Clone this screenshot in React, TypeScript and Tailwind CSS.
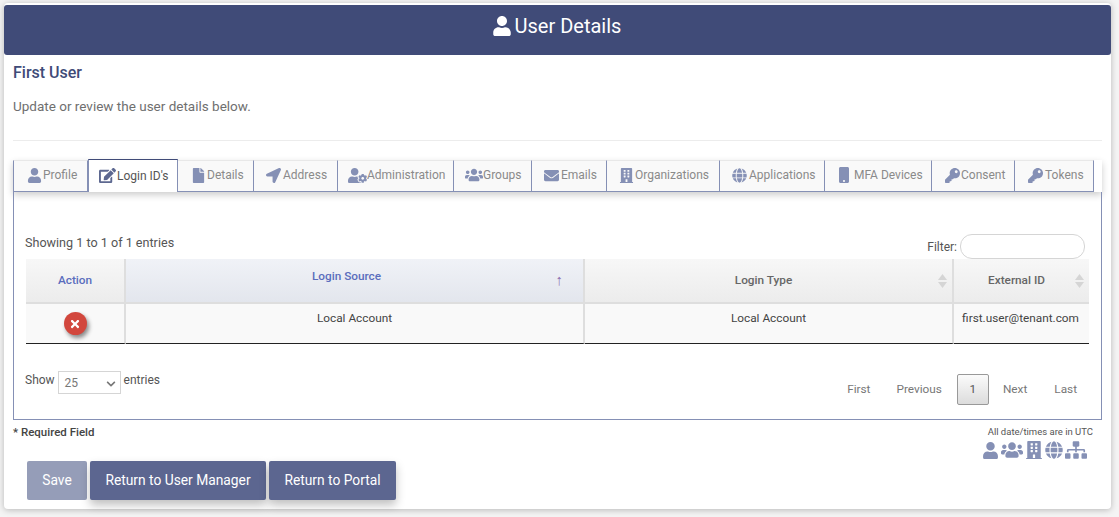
import { FaUser, FaEdit, FaFile, FaLocationArrow, FaUserCog, FaUsers, FaEnvelope, FaBuilding, FaGlobe, FaMobile, FaKey, FaSitemap, FaTimes, FaChevronDown } from "react-icons/fa";

const tabs = [
  { label: "Profile", Icon: FaUser, w: "w-[75px] pl-[13px]", size: "text-[15px]", gap: "gap-[1px]" },
  { label: "Login ID's", Icon: FaEdit, w: "w-[90px] pl-[10px]", size: "text-[17px]", gap: "gap-[1px]", active: true },
  { label: "Details", Icon: FaFile, w: "w-[76px] pl-[13px]", size: "text-[15px]", gap: "gap-[1px]" },
  { label: "Address", Icon: FaLocationArrow, w: "w-[84px] pl-[12px]", size: "text-[15px]", gap: "gap-[2px]" },
  { label: "Administration", Icon: FaUserCog, w: "w-[116px] pl-[10px]", size: "text-[19px]", gap: "gap-0" },
  { label: "Groups", Icon: FaUsers, w: "w-[78px] pl-[11px]", size: "text-[18px]", gap: "gap-0" },
  { label: "Emails", Icon: FaEnvelope, w: "w-[75px] pl-[12px]", size: "text-[15px]", gap: "gap-[2px]" },
  { label: "Organizations", Icon: FaBuilding, w: "w-[113px] pl-[12px]", size: "text-[15px]", gap: "gap-[1px]" },
  { label: "Applications", Icon: FaGlobe, w: "w-[105px] pl-[12px]", size: "text-[15px]", gap: "gap-[2px]" },
  { label: "MFA Devices", Icon: FaMobile, w: "w-[107px] pl-[11px]", size: "text-[16px]", gap: "gap-[2px]" },
  { label: "Consent", Icon: FaKey, w: "w-[83px] pl-[13px]", size: "text-[15px]", gap: "gap-[1px]" },
  { label: "Tokens", Icon: FaKey, w: "w-[79px] pl-[13px]", size: "text-[15px]", gap: "gap-[2px]" },
];

function Sort() {
  return (
    <svg width="9" height="14" viewBox="0 0 9 14" className="block">
      <path d="M4.5 0 L9 6 L0 6 Z" fill="#d5d5d5" />
      <path d="M4.5 14 L9 8 L0 8 Z" fill="#d5d5d5" />
    </svg>
  );
}

const cellR = "border-r-2 border-r-[#dedede]";
const headB = "border-b-2 border-b-[#dedede]";
const rowB = "border-b border-b-[#222]";

export default function App() {
  return (
    <div className="h-[517px] bg-[#f4f4f4] pt-[3px] pl-[4px] pr-[8px] font-['Roboto',sans-serif] overflow-hidden">
      <div className="h-[506px] pt-[2px] bg-white rounded-[4px] shadow-[0_1px_6px_rgba(0,0,0,0.25)]">
        <header className="h-[50px] pb-[8px] pr-[2px] bg-[#404b78] rounded-[3px] flex items-center justify-center gap-[3px] text-white text-[20px]">
          <FaUser className="text-[20px]" />
          <span>User Details</span>
        </header>
        <div className="px-[9px]">
          <h2 className="mt-[8px] text-[16px] leading-[20px] font-medium text-[#404b78]">First User</h2>
          <p className="mt-[13px] text-[13.5px] leading-[20px] text-[#6f6f6f]">Update or review the user details below.</p>
          <hr className="mt-[24px] border-t border-[#ececec]" />
          <div className="mt-[19px] bg-white shadow-[0_3px_7px_rgba(0,0,0,0.2)] h-[32px] flex items-stretch">
            {tabs.map(({ label, Icon, w, size, gap, active }, i) => (
              <div
                key={label}
                className={
                  active
                    ? `${w} -mt-[1px] h-[33px] pb-[1px] bg-white border-x border-t border-t-[#404b78] border-x-[#8590b5] flex items-center ${gap} text-[12px] text-[#555] relative z-10`
                    : `${w} h-[32px] pb-[2px] bg-[#f9f9f9] ${i === 0 ? "border-l" : ""} border-r border-t border-b border-[#8590b5] border-t-[#e8e8e8] flex items-center ${gap} text-[12px] text-[#8a8a8a]`
                }
              >
                <Icon className={`${size} shrink-0 ${active ? "text-[#5d6890]" : "text-[#8590b5]"}`} />
                <span>{label}</span>
              </div>
            ))}
          </div>
          <section className="h-[228px] border-x border-b border-[#8590b5] px-[12px] pt-[42px] text-[12px] text-[#555]">
            <div className="flex items-end justify-between h-[25px]">
              <span className="mb-[6px] ml-[-1px] text-[12.6px]">Showing 1 to 1 of 1 entries</span>
              <span className="flex items-center gap-[3px] mr-[4px]">
                Filter:
                <span className="w-[125px] h-[25px] rounded-[12px] border border-[#d5d5d5] bg-white" />
              </span>
            </div>
            <table className="w-[1063px] table-fixed border-separate border-spacing-0 text-[11.8px]">
              <colgroup>
                <col className="w-[100px]" />
                <col className="w-[459px]" />
                <col className="w-[369px]" />
                <col className="w-[135px]" />
              </colgroup>
              <thead>
                <tr className="h-[45px]">
                  <th className={`font-medium text-[#5a6dbd] bg-gradient-to-b from-[#f7f7f7] to-[#ececec] ${cellR} ${headB}`}>Action</th>
                  <th className={`font-medium text-[#5a6dbd] bg-gradient-to-b from-[#f0f2f7] to-[#e3e6ed] ${cellR} ${headB}`}>
                    <div className="relative flex justify-center">
                      <span className="relative left-[-8px] top-[-4px]">Login Source</span>
                      <span className="absolute right-[20px] top-[-2px] text-[15px] leading-[20px] text-[#8e6fb0] font-normal">↑</span>
                    </div>
                  </th>
                  <th className={`font-medium text-[#666] bg-gradient-to-b from-[#f7f7f7] to-[#ececec] ${cellR} ${headB}`}>
                    <div className="relative flex justify-center">
                      <span className="relative left-[-5px]">Login Type</span>
                      <span className="absolute right-[5px] top-[2px]"><Sort /></span>
                    </div>
                  </th>
                  <th className={`font-medium text-[#666] bg-gradient-to-b from-[#f7f7f7] to-[#ececec] ${headB}`}>
                    <div className="relative flex justify-center">
                      <span className="relative left-[-5px]">External ID</span>
                      <span className="absolute right-[5px] top-[2px]"><Sort /></span>
                    </div>
                  </th>
                </tr>
              </thead>
              <tbody>
                <tr className="h-[40px] bg-[#f9f9f9] text-[#444]">
                  <td className={`${cellR} ${rowB}`}>
                    <div className="flex justify-center">
                      <span className="w-[23px] h-[23px] rounded-full bg-[#d2473d] text-white flex items-center justify-center shadow-[2px_3px_4px_rgba(0,0,0,0.45)] text-[12px]">
                        <FaTimes />
                      </span>
                    </div>
                  </td>
                  <td className={`${cellR} ${rowB} text-center align-top pt-[6px]`}>Local Account</td>
                  <td className={`${cellR} ${rowB} text-center align-top pt-[6px]`}>Local Account</td>
                  <td className={`${rowB} text-center align-top pt-[6px]`}><span className="relative left-[-1px]">first.user@tenant.com</span></td>
                </tr>
              </tbody>
            </table>
            <div className="mt-[27px] flex items-start justify-between ml-[-1px]">
              <div className="flex items-start gap-[3px]">
                <span>Show</span>
                <span className="relative w-[63px] h-[23px] border border-[#d5d5d5] bg-white text-[#777] pl-[6px] flex items-center">
                  25
                  <FaChevronDown className="absolute right-[4px] top-[7px] text-[10px] text-[#777]" />
                </span>
                <span>entries</span>
              </div>
              <div className="flex items-center text-[11.8px] text-[#777] mt-[3px]">
                <span className="mr-[26px]">First</span>
                <span className="mr-[15px]">Previous</span>
                <span className="w-[32px] h-[31px] rounded-[2px] border border-[#999] bg-gradient-to-b from-[#fbfbfb] to-[#dcdcdc] flex items-center justify-center text-[#555] mr-[14px]">1</span>
                <span className="mr-[27px]">Next</span>
                <span className="mr-[12px]">Last</span>
              </div>
            </div>
          </section>
          <div className="flex justify-between mt-[5px] pr-[8px]">
            <span className="text-[11.5px] leading-[14px] font-medium text-[#444]">* Required Field</span>
            <div className="flex flex-col items-end mt-[1px]">
              <span className="text-[9.5px] leading-[11px] text-[#555] mr-[1px]">All date/times are in UTC</span>
              <div className="flex items-center gap-[2px] text-[#8590b5] mt-[2px] mr-[7px]">
                <FaUser className="text-[17px]" />
                <FaUsers className="text-[22px]" />
                <FaBuilding className="text-[18px]" />
                <FaGlobe className="text-[18px]" />
                <FaSitemap className="text-[22px]" />
              </div>
            </div>
          </div>
          <div className="mt-0 ml-[14px] flex gap-[3px] text-[13.8px] text-white">
            <button className="w-[60px] h-[39px] rounded-[2px] bg-[#959db8]">Save</button>
            <button className="w-[176px] h-[39px] rounded-[2px] bg-[#5c6690] shadow-[0_5px_10px_rgba(0,0,0,0.25)]">Return to User Manager</button>
            <button className="w-[127px] h-[39px] rounded-[2px] bg-[#5c6690] shadow-[0_5px_10px_rgba(0,0,0,0.25)]">Return to Portal</button>
          </div>
        </div>
      </div>
    </div>
  );
}
